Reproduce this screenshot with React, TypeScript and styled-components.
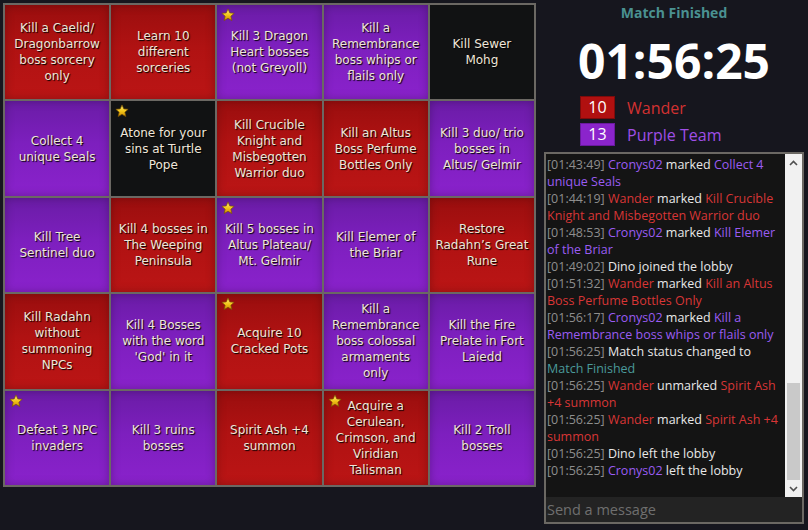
import React from "react";
import styled, { createGlobalStyle } from "styled-components";

const Global = createGlobalStyle`
  html, body { margin: 0; padding: 0; background: #16161e; }
  body { width: 808px; height: 530px; overflow: hidden; }
`;

type Team = "red" | "purple" | "black";

const cells: { t: Team; text: string; star?: boolean }[] = [
  { t: "red", text: "Kill a Caelid/\nDragonbarrow\nboss sorcery\nonly" },
  { t: "red", text: "Learn 10\ndifferent\nsorceries" },
  { t: "purple", text: "Kill 3 Dragon\nHeart bosses\n(not Greyoll)", star: true },
  { t: "purple", text: "Kill a\nRemembrance\nboss whips or\nflails only" },
  { t: "black", text: "Kill Sewer\nMohg" },
  { t: "purple", text: "Collect 4\nunique Seals" },
  { t: "black", text: "Atone for your\nsins at Turtle\nPope", star: true },
  { t: "red", text: "Kill Crucible\nKnight and\nMisbegotten\nWarrior duo" },
  { t: "red", text: "Kill an Altus\nBoss Perfume\nBottles Only" },
  { t: "purple", text: "Kill 3 duo/ trio\nbosses in\nAltus/ Gelmir" },
  { t: "purple", text: "Kill Tree\nSentinel duo" },
  { t: "red", text: "Kill 4 bosses in\nThe Weeping\nPeninsula" },
  { t: "purple", text: "Kill 5 bosses in\nAltus Plateau/\nMt. Gelmir", star: true },
  { t: "purple", text: "Kill Elemer of\nthe Briar" },
  { t: "red", text: "Restore\nRadahn\u2019s Great\nRune" },
  { t: "red", text: "Kill Radahn\nwithout\nsummoning\nNPCs" },
  { t: "purple", text: "Kill 4 Bosses\nwith the word\n'God' in it" },
  { t: "red", text: "Acquire 10\nCracked Pots", star: true },
  { t: "purple", text: "Kill a\nRemembrance\nboss colossal\narmaments\nonly" },
  { t: "purple", text: "Kill the Fire\nPrelate in Fort\nLaiedd" },
  { t: "purple", text: "Defeat 3 NPC\ninvaders", star: true },
  { t: "purple", text: "Kill 3 ruins\nbosses" },
  { t: "red", text: "Spirit Ash +4\nsummon" },
  { t: "red", text: "Acquire a\nCerulean,\nCrimson, and\nViridian\nTalisman", star: true },
  { t: "purple", text: "Kill 2 Troll\nbosses" },
];

const bg: Record<Team, string> = {
  red: "linear-gradient(to bottom, #9a0e0e 0%, #b01212 45%, #bb1515 100%)",
  purple: "linear-gradient(to bottom, #6a1ca6 0%, #7d1fbe 45%, #8a22cc 100%)",
  black: "#111213",
};

const Page = styled.div`
  display: flex;
  align-items: flex-start;
  padding: 3px 0 0 3px;
  gap: 4px;
`;

const Board = styled.div`
  width: 533px;
  height: 484px;
  box-sizing: border-box;
  display: grid;
  grid-template-columns: repeat(5, 1fr);
  grid-template-rows: repeat(5, 1fr);
  gap: 2px;
  padding: 2px;
  background: #6b6863;
`;

const Cell = styled.div<{ $team: Team }>`
  position: relative;
  display: flex;
  align-items: center;
  justify-content: center;
  background: ${(p) => bg[p.$team]};
  box-shadow: inset 0 0 10px rgba(0, 0, 0, ${(p) => (p.$team === "black" ? 0 : 0.25)});
  font-family: "DejaVu Sans", Verdana, sans-serif;
  font-size: 12px;
  line-height: 16px;
  color: #efe6d9;
  text-shadow: 1px 1px 1px #000;
  text-align: center;
  white-space: pre;
`;

const StarMark = styled.svg`
  position: absolute;
  top: 3px;
  left: 4px;
  width: 14px;
  height: 14px;
`;

const Star = () => (
  <StarMark viewBox="0 0 24 24">
    <defs>
      <linearGradient id="sg" x1="0" y1="0" x2="0" y2="1">
        <stop offset="0" stopColor="#fff27a" />
        <stop offset="0.55" stopColor="#f2c417" />
        <stop offset="1" stopColor="#c98a06" />
      </linearGradient>
    </defs>
    <path
      d="M12 1.5l3.1 6.9 7.4.7-5.6 5 1.7 7.4L12 17.7l-6.6 3.8 1.7-7.4-5.6-5 7.4-.7z"
      fill="url(#sg)"
      stroke="#7a5200"
      strokeWidth="1.2"
      strokeLinejoin="round"
    />
  </StarMark>
);

const Side = styled.div`
  width: 268px;
  margin-top: -3px;
  display: flex;
  flex-direction: column;
  align-items: center;
  font-family: "Open Sans", "Noto Sans", sans-serif;
`;

const Status = styled.div`
  margin-top: 3px;
  font-size: 14px;
  line-height: 20px;
  font-weight: 700;
  color: #4a9191;
`;

const Timer = styled.div`
  margin-top: 9px;
  font-size: 48px;
  line-height: 58px;
  font-weight: 700;
  color: #ffffff;
`;

const Scores = styled.div`
  align-self: stretch;
  padding-left: 40px;
  margin-top: 6px;
  display: flex;
  flex-direction: column;
  gap: 4px;
`;

const ScoreRow = styled.div`
  display: flex;
  align-items: center;
  gap: 12px;
`;

const ScoreBox = styled.div<{ $team: Team }>`
  width: 33px;
  height: 21px;
  display: flex;
  align-items: center;
  justify-content: center;
  background: ${(p) => (p.$team === "red" ? "#b01010" : "#8b24cc")};
  border: 1px solid ${(p) => (p.$team === "red" ? "#7e0b0b" : "#6a1a9e")};
  color: #fff;
  font-size: 16px;
  line-height: 21px;
`;

const ScoreName = styled.div<{ $team: Team }>`
  font-size: 16px;
  line-height: 22px;
  color: ${(p) => (p.$team === "red" ? "#d23131" : "#9f4ee6")};
`;

const Chat = styled.div`
  align-self: stretch;
  margin: 6px 4px 0;
  height: 372px;
  box-sizing: border-box;
  border: 2px solid #6b6863;
  display: flex;
  flex-direction: column;
  background: #141414;
`;

const ChatBody = styled.div`
  flex: 1;
  display: flex;
  min-height: 0;
`;

const Messages = styled.div`
  flex: 1;
  padding: 2px 1px 0 1px;
  font-size: 12.5px;
  line-height: 17px;
  color: #e8e8e8;
  overflow: hidden;
`;

const Line = styled.div``;

const Time = styled.span`
  color: #8e8e8e;
`;

const Who = styled.span<{ $c: "red" | "purple" | "teal" | "white" }>`
  color: ${(p) =>
    p.$c === "red" ? "#d83636" : p.$c === "purple" ? "#9a5cf2" : p.$c === "teal" ? "#4a9a9a" : "#e8e8e8"};
`;

const Scrollbar = styled.div`
  width: 17px;
  display: flex;
  flex-direction: column;
  background: #f1f1f1;
`;

const ScrollBtn = styled.div`
  height: 17px;
  display: flex;
  align-items: center;
  justify-content: center;
`;

const ScrollSpace = styled.div`
  flex: 1;
`;

const Thumb = styled.div`
  height: 97px;
  margin: 0 2px;
  background: #c9c9c9;
`;

const Input = styled.input`
  height: 25px;
  box-sizing: border-box;
  border: none;
  outline: none;
  background: #232323;
  color: #ddd;
  padding: 0 1px;
  font-family: "Open Sans", "Noto Sans", sans-serif;
  font-size: 14.5px;
  &::placeholder {
    color: #6f6f6f;
  }
`;

const Chevron = ({ up }: { up?: boolean }) => (
  <svg width="9" height="6" viewBox="0 0 9 6">
    <polyline
      points={up ? "1,5 4.5,1.5 8,5" : "1,1 4.5,4.5 8,1"}
      fill="none"
      stroke="#505050"
      strokeWidth="1.6"
    />
  </svg>
);

type Seg = [string, "red" | "purple" | "teal" | "white"];
const messages: { time: string; segs: Seg[] }[] = [
  { time: "01:43:49", segs: [["Cronys02", "purple"], [" marked ", "white"], ["Collect 4 unique Seals", "purple"]] },
  { time: "01:44:19", segs: [["Wander", "red"], [" marked ", "white"], ["Kill Crucible Knight and Misbegotten Warrior duo", "red"]] },
  { time: "01:48:53", segs: [["Cronys02", "purple"], [" marked ", "white"], ["Kill Elemer of the Briar", "purple"]] },
  { time: "01:49:02", segs: [["Dino joined the lobby", "white"]] },
  { time: "01:51:32", segs: [["Wander", "red"], [" marked ", "white"], ["Kill an Altus Boss Perfume Bottles Only", "red"]] },
  { time: "01:56:17", segs: [["Cronys02", "purple"], [" marked ", "white"], ["Kill a Remembrance boss whips or flails only", "purple"]] },
  { time: "01:56:25", segs: [["Match status changed to ", "white"], ["Match Finished", "teal"]] },
  { time: "01:56:25", segs: [["Wander", "red"], [" unmarked ", "white"], ["Spirit Ash +4 summon", "red"]] },
  { time: "01:56:25", segs: [["Wander", "red"], [" marked ", "white"], ["Spirit Ash +4 summon", "red"]] },
  { time: "01:56:25", segs: [["Dino left the lobby", "white"]] },
  { time: "01:56:25", segs: [["Cronys02", "purple"], [" left the lobby", "white"]] },
];

export default function App() {
  return (
    <>
      <Global />
      <Page>
        <Board>
          {cells.map((c, i) => (
            <Cell key={i} $team={c.t}>
              {c.star && <Star />}
              {c.text}
            </Cell>
          ))}
        </Board>
        <Side>
          <Status>Match Finished</Status>
          <Timer>01:56:25</Timer>
          <Scores>
            <ScoreRow>
              <ScoreBox $team="red">10</ScoreBox>
              <ScoreName $team="red">Wander</ScoreName>
            </ScoreRow>
            <ScoreRow>
              <ScoreBox $team="purple">13</ScoreBox>
              <ScoreName $team="purple">Purple Team</ScoreName>
            </ScoreRow>
          </Scores>
          <Chat>
            <ChatBody>
              <Messages>
                {messages.map((m, i) => (
                  <Line key={i}>
                    <Time>[{m.time}]</Time>{" "}
                    {m.segs.map(([s, c], j) => (
                      <Who key={j} $c={c}>
                        {s}
                      </Who>
                    ))}
                  </Line>
                ))}
              </Messages>
              <Scrollbar>
                <ScrollBtn>
                  <Chevron up />
                </ScrollBtn>
                <ScrollSpace />
                <Thumb />
                <ScrollBtn>
                  <Chevron />
                </ScrollBtn>
              </Scrollbar>
            </ChatBody>
            <Input placeholder="Send a message" />
          </Chat>
        </Side>
      </Page>
    </>
  );
}
